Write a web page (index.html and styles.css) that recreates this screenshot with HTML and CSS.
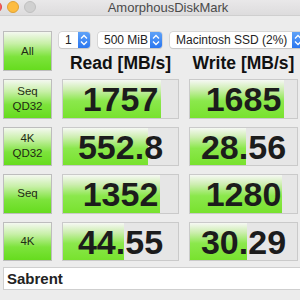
FILE: index.html
```html
<!DOCTYPE html>
<html lang="en">
<head>
    <meta charset="UTF-8">
    <meta name="viewport" content="width=device-width, initial-scale=1.0">
    <title>AmorphousDiskMark</title>
    <link rel="stylesheet" href="styles.css">
</head>
<body>
    <div class="window">
        <div class="titlebar">
            <div class="lights">
                <span class="light red"></span>
                <span class="light yellow"></span>
                <span class="light gray"></span>
            </div>
            <div class="title">AmorphousDiskMark</div>
        </div>

        <div class="board">
            <div class="btn btn-all">All</div>

            <div class="head">
                <div class="controls">
                    <div class="select sel-count"><span>1</span><i class="stepper"><svg viewBox="0 0 12 16"><path d="M3 6.5 6 3.5 9 6.5M3 9.5 6 12.5 9 9.5"/></svg></i></div>
                    <div class="select sel-size"><span>500 MiB</span><i class="stepper"><svg viewBox="0 0 12 16"><path d="M3 6.5 6 3.5 9 6.5M3 9.5 6 12.5 9 9.5"/></svg></i></div>
                    <div class="select sel-disk"><span>Macintosh SSD (2%)</span><i class="stepper"><svg viewBox="0 0 12 16"><path d="M3 6.5 6 3.5 9 6.5M3 9.5 6 12.5 9 9.5"/></svg></i></div>
                </div>
                <div class="labels">
                    <div class="label label-read">Read [MB/s]</div>
                    <div class="label label-write">Write [MB/s]</div>
                </div>
            </div>

            <div class="btn">Seq<br>QD32</div>
            <div class="cell"><div class="bar" style="width: 85%"></div><span class="num">1757</span></div>
            <div class="cell"><div class="bar" style="width: 88%"></div><span class="num">1685</span></div>

            <div class="btn">4K<br>QD32</div>
            <div class="cell"><div class="bar" style="width: 74%"></div><span class="num">552.8</span></div>
            <div class="cell"><div class="bar" style="width: 52%"></div><span class="num">28.56</span></div>

            <div class="btn">Seq</div>
            <div class="cell"><div class="bar" style="width: 84%"></div><span class="num">1352</span></div>
            <div class="cell"><div class="bar" style="width: 86%"></div><span class="num">1280</span></div>

            <div class="btn">4K</div>
            <div class="cell"><div class="bar" style="width: 53%"></div><span class="num">44.55</span></div>
            <div class="cell"><div class="bar" style="width: 53%"></div><span class="num">30.29</span></div>
        </div>

        <div class="name">Sabrent</div>
    </div>
</body>
</html>
```

FILE: styles.css
```css
html, body {
    margin: 0;
    padding: 0;
    width: 300px;
    height: 300px;
    overflow: hidden;
}

body {
    font-family: 'Liberation Sans', Arial, sans-serif;
    background-color: #ececec;
    color: #1e1e1e;
}

.window {
    width: 300px;
    height: 300px;
    overflow: hidden;
}

.titlebar {
    position: relative;
    height: 15px;
    background: linear-gradient(#e9e8e9, #dddcdd);
    border-bottom: 1px solid #cfcfcf;
}

.lights {
    position: absolute;
    left: -10px;
    top: 1px;
    display: flex;
    gap: 5px;
}

.light {
    width: 12px;
    height: 12px;
    border-radius: 50%;
    box-sizing: border-box;
}

.red { background: #fc605b; border: 1px solid #de4a45; }
.yellow { background: #fdbc40; border: 1px solid #dea236; }
.gray { background: #d0d0d0; border: 1px solid #c0c0c0; }

.title {
    text-align: center;
    font-size: 13px;
    line-height: 15px;
    color: #4a4a4a;
    padding-left: 36px;
}

.board {
    display: grid;
    grid-template-columns: 49px 117px 109px;
    grid-template-rows: 40px repeat(4, 39.5px);
    column-gap: 10px;
    row-gap: 8px;
    padding: 15px 0 0 3px;
}

.btn {
    box-sizing: border-box;
    border: 1px solid #bdbdbd;
    background: linear-gradient(#f4f8f0 0%, #c8f0a8 30%, #7de33c 65%, #66dc1e 100%);
    display: flex;
    align-items: center;
    justify-content: center;
    text-align: center;
    font-size: 11.5px;
    line-height: 15px;
    color: #1f2a14;
}

.head {
    grid-column: 2 / 4;
    display: flex;
    flex-direction: column;
    min-width: 0;
}

.controls {
    display: flex;
    gap: 8px;
    margin: 1px -20px 0 -3px;
    height: 16px;
}

.select {
    flex-shrink: 0;
    box-sizing: border-box;
    height: 16px;
    background: #fff;
    border-radius: 3px;
    box-shadow: 0 0 0 0.5px #c4c4c4, 0 0.5px 1px rgba(0, 0, 0, 0.15);
    display: flex;
    align-items: center;
    justify-content: space-between;
    font-size: 12px;
    white-space: nowrap;
    color: #222;
}

.select span {
    padding-left: 6px;
}

.sel-count { width: 31px; }
.sel-size { width: 64px; }
.sel-disk { width: 134px; }

.stepper {
    flex-shrink: 0;
    width: 12px;
    height: 16px;
    background: linear-gradient(#5fa2f8, #2a76f0);
    border-radius: 0 3px 3px 0;
    display: flex;
}

.stepper svg {
    width: 12px;
    height: 16px;
    fill: none;
    stroke: #fff;
    stroke-width: 1.3;
}

.labels {
    display: flex;
    gap: 10px;
    margin-top: 4px;
}

.label {
    text-align: center;
    font-weight: bold;
    font-size: 17.5px;
    line-height: 22px;
    color: #111;
}

.label-read { width: 117px; }
.label-write { width: 109px; }

.cell {
    position: relative;
    box-sizing: border-box;
    border: 1px solid #cacaca;
    background: #e6e6e6;
    overflow: hidden;
}

.bar {
    position: absolute;
    left: 0;
    top: 0;
    bottom: 0;
    background: linear-gradient(#f6f8f4 0%, #cdeeb0 25%, #8be84c 55%, #78e22e 100%);
}

.num {
    position: relative;
    display: block;
    text-align: center;
    font-weight: bold;
    font-size: 34px;
    line-height: 38px;
    color: #1c1c1c;
}

.name {
    box-sizing: border-box;
    margin: 6px 0 0 3px;
    height: 23px;
    background: #fff;
    border: 1px solid #cfcfcf;
    border-right: none;
    font-weight: bold;
    font-size: 15px;
    line-height: 21px;
    padding-left: 3px;
    color: #222;
}
```
